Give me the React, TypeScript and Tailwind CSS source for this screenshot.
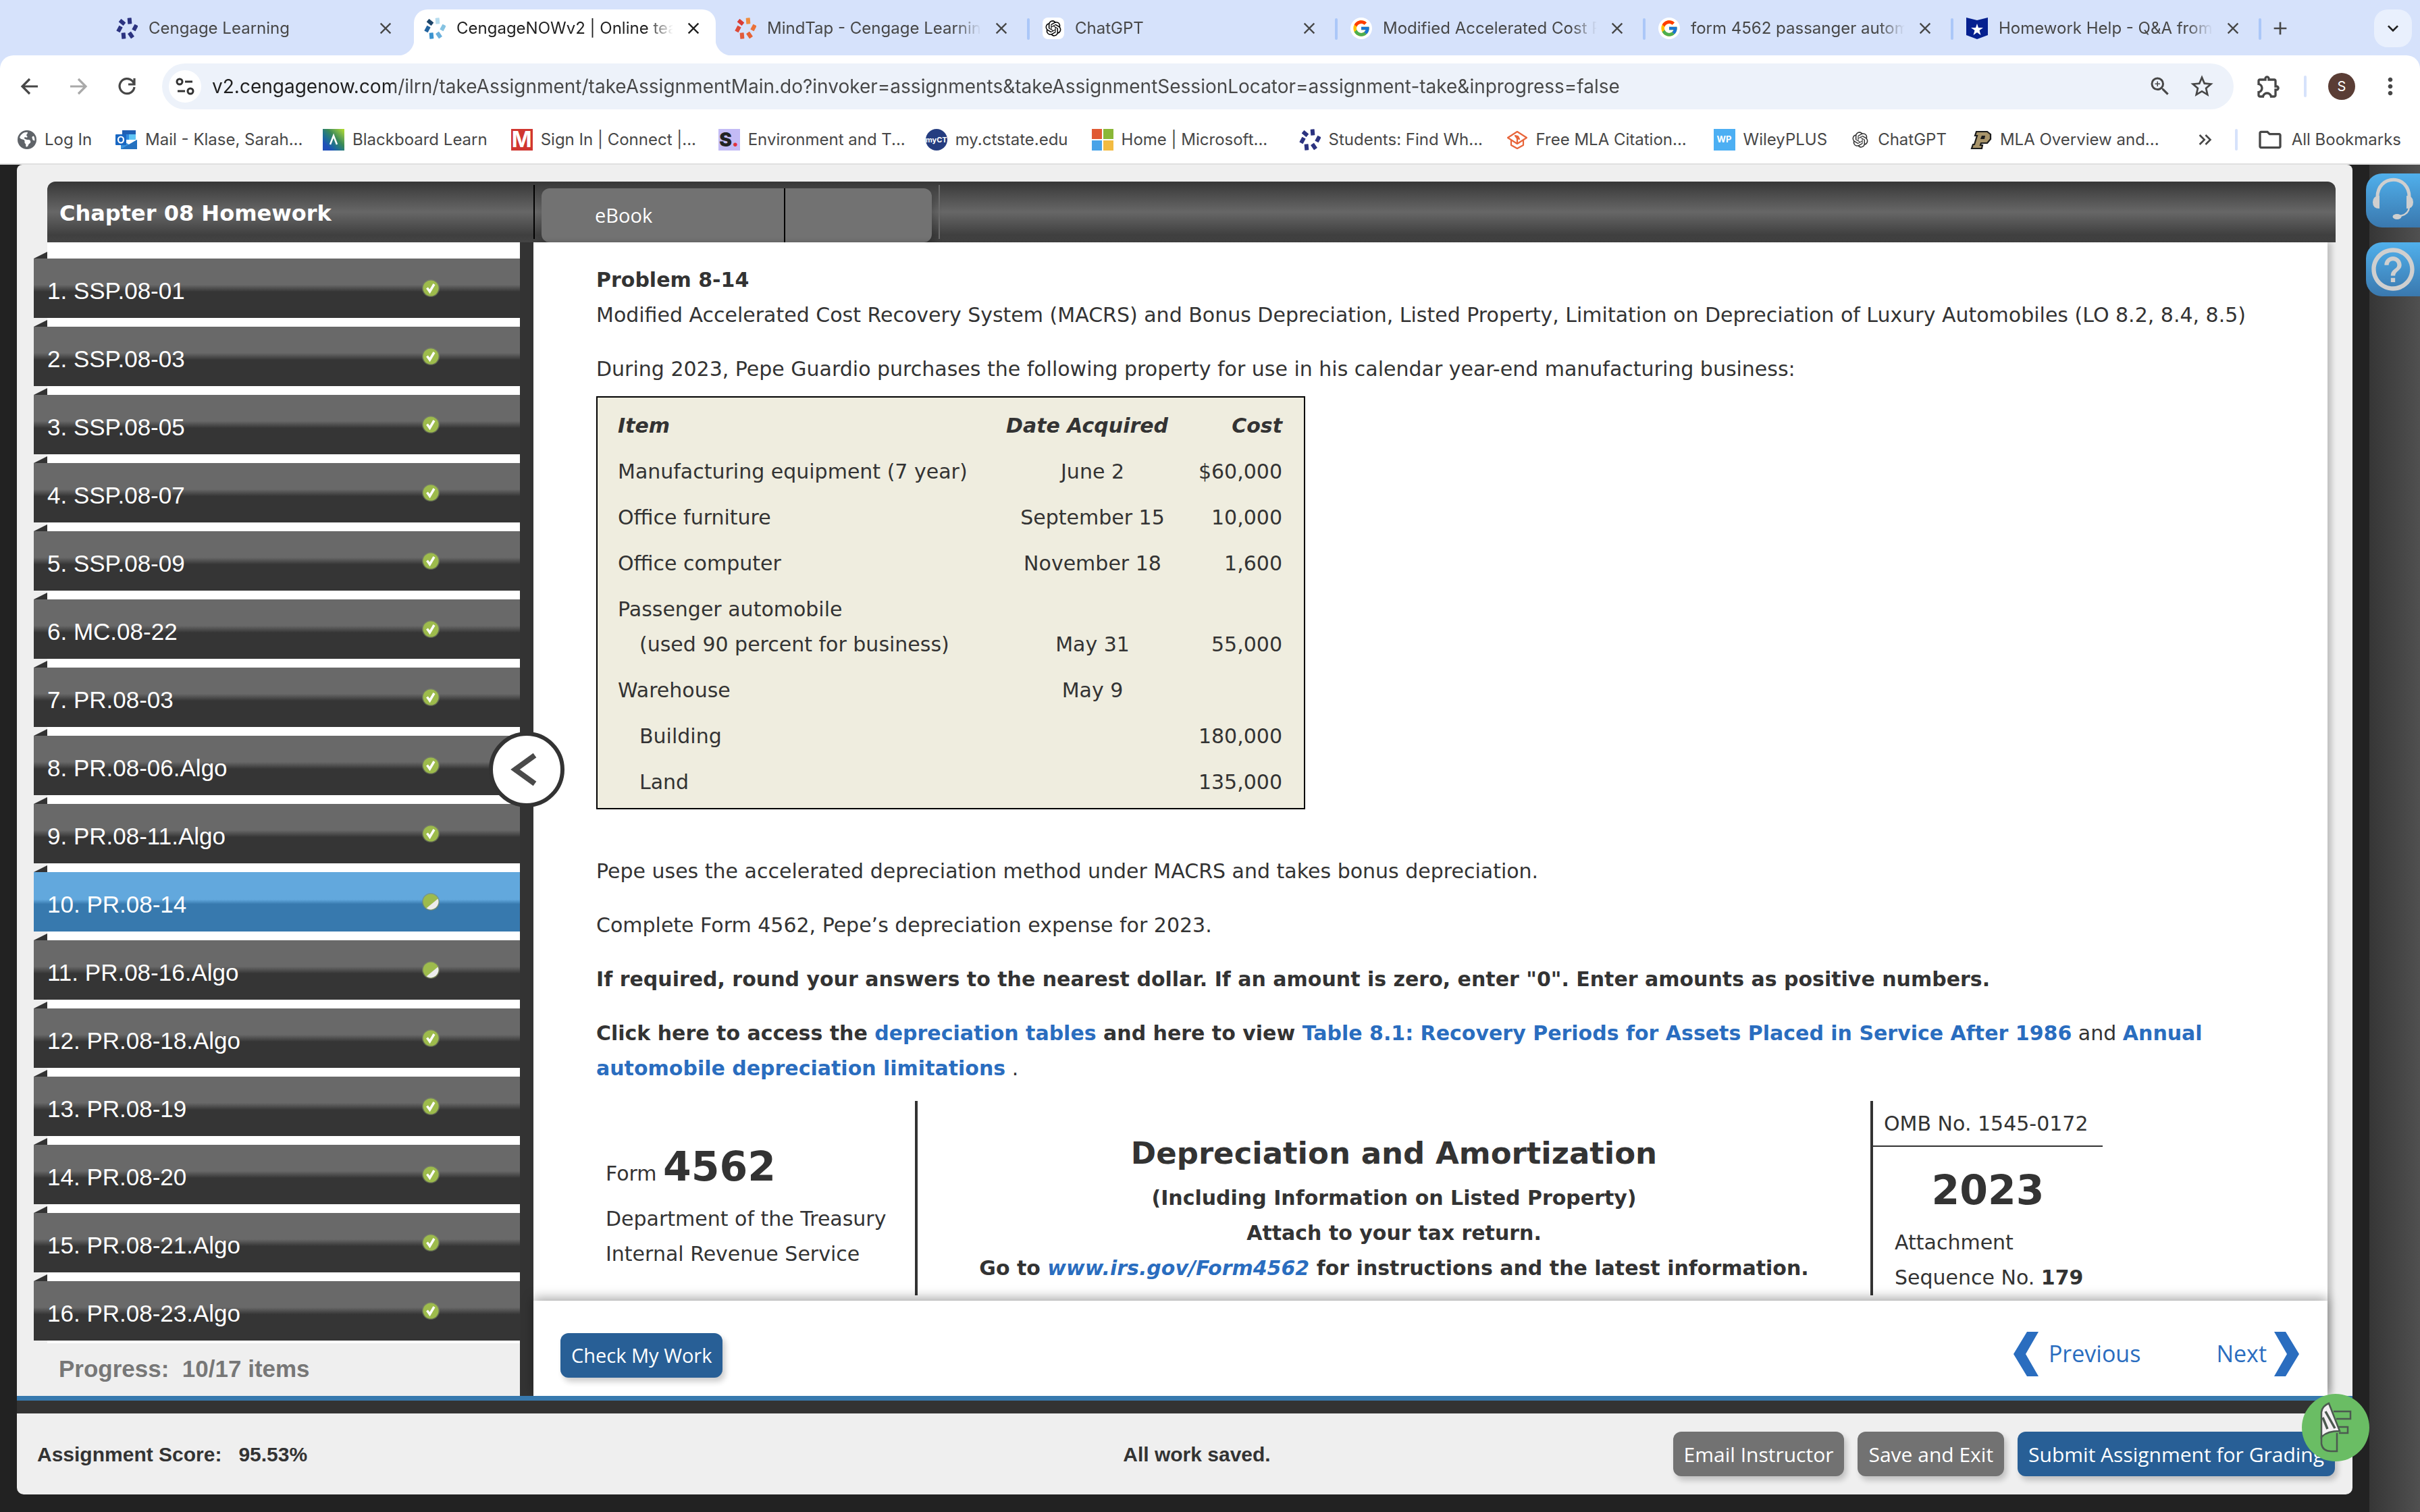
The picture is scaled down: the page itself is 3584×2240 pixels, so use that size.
import type { ReactNode } from 'react'
import {
  MdAdd,
  MdClose,
  MdHelpOutline,
  MdKeyboardArrowDown,
  MdKeyboardDoubleArrowRight,
  MdMoreVert,
  MdOutlineExtension,
  MdOutlineFolder,
  MdStarBorder,
  MdZoomIn,
} from 'react-icons/md'
import { FaEarthAmericas } from 'react-icons/fa6'
import { FcGoogle } from 'react-icons/fc'
import { RiOpenaiFill } from 'react-icons/ri'
import clsx from 'clsx'

const navy = ['#2c3380', '#2c3380', '#2c3380', '#2c3380', '#2c3380', '#2c3380']
const blues = ['#b5dcee', '#86c3e2', '#6bb0dc', '#3a93cf', '#23649f', '#1d4468']
const oranges = ['#ef8b3c', '#ea7238', '#e56236', '#e25a3a', '#dd4a38', '#d93b34']

/* Cengage pinwheel, petals run clockwise from the top */
function Pinwheel({ colors }: { colors: string[] }) {
  const petals = [
    [20, 5, -5],
    [28, 15, 28],
    [22, 26, -35],
    [11, 27, -5],
    [5, 17, 28],
    [9, 7, -50],
  ]
  return (
    <svg viewBox="0 0 32 32" className="size-8 shrink-0">
      {petals.map(([x, y, r], i) => (
        <rect
          key={i}
          x={x - 3}
          y={y - 4.5}
          width="6"
          height="9"
          rx="0.6"
          fill={colors[i]}
          transform={`rotate(${r} ${x} ${y})`}
        />
      ))}
    </svg>
  )
}

function ChatBadge() {
  return (
    <span className="flex size-8 shrink-0 items-center justify-center rounded-lg bg-white">
      <RiOpenaiFill className="size-7 text-black" />
    </span>
  )
}

function GoogleBadge() {
  return (
    <span className="flex size-8 shrink-0 items-center justify-center rounded-full bg-white">
      <FcGoogle className="size-7" />
    </span>
  )
}

function StarBanner() {
  return (
    <svg viewBox="0 0 32 32" className="size-8 shrink-0">
      <path d="M0 0l16 4L32 0v26l-16 6L0 26z" fill="#06208f" />
      <path d="M16 9l2 6h7l-5.500 4 2 7-5.500-4-5.500 4 2-7L7 15h7z" fill="#fff" />
    </svg>
  )
}

function Outlook() {
  return (
    <svg viewBox="0 0 32 32" className="size-8 shrink-0">
      <path d="M10 2h20v14H10z" fill="#1f5fb4" />
      <path d="M10 8h10v8H10z" fill="#2f8ade" />
      <path d="M20 8h10v8H20z" fill="#5fc5f5" />
      <path d="M8 16l12 7 12-7v14H8z" fill="#3b93dd" />
      <path d="M8 30l24-14v14z" fill="#2471c0" />
      <rect x="0" y="8" width="16" height="16" rx="1" fill="#1967c2" />
      <ellipse cx="8" cy="16" rx="4" ry="4.500" fill="none" stroke="#fff" strokeWidth="2.200" />
    </svg>
  )
}

function Blackboard() {
  return (
    <span className="flex size-8 shrink-0 items-center justify-center bg-linear-to-bl from-[#b6e020] via-[#3a8a56] via-40% to-[#1f4fb8] to-80%">
      <svg viewBox="0 0 32 32" className="size-8">
        <path d="M11 23l5-13 5 13" fill="none" stroke="#fff" strokeWidth="2.500" />
      </svg>
    </span>
  )
}

function PenDiamond() {
  return (
    <svg viewBox="0 0 32 32" className="size-8 shrink-0" fill="none" stroke="#e8653a" strokeWidth="2.200" strokeLinejoin="round">
      <path d="M16 4l14 9-14 9L2 13z" />
      <path d="M7 17v7l9 5 9-5v-7" />
      <path d="M13 10l4 1 2 4-3-1z" fill="#e8653a" />
      <path d="M16 14v8" />
    </svg>
  )
}

function MicrosoftLogo() {
  return (
    <span className="grid size-8 shrink-0 grid-cols-2 gap-[2px]">
      <span className="bg-[#e05a33]" />
      <span className="bg-[#8ab737]" />
      <span className="bg-[#49a3e8]" />
      <span className="bg-[#f3bb41]" />
    </span>
  )
}

const tabs: { title: string; icon: ReactNode }[] = [
  { title: 'Cengage Learning', icon: <Pinwheel colors={navy} /> },
  { title: 'CengageNOWv2 | Online teaching and learning', icon: <Pinwheel colors={blues} /> },
  { title: 'MindTap - Cengage Learning', icon: <Pinwheel colors={oranges} /> },
  { title: 'ChatGPT', icon: <ChatBadge /> },
  { title: 'Modified Accelerated Cost Recovery', icon: <GoogleBadge /> },
  { title: 'form 4562 passanger automobile', icon: <GoogleBadge /> },
  { title: 'Homework Help - Q&A from Online', icon: <StarBanner /> },
]

const bookmarks: { label: string; icon: ReactNode; wide?: boolean }[] = [
  { label: 'Log In', icon: <FaEarthAmericas className="size-7 shrink-0 text-[#5f6368]" /> },
  { label: 'Mail - Klase, Sarah...', icon: <Outlook />, wide: true },
  { label: 'Blackboard Learn', icon: <Blackboard /> },
  {
    label: 'Sign In | Connect |...',
    wide: true,
    icon: (
      <span className="flex size-8 shrink-0 items-center justify-center bg-[#d03630] text-[32px]/[32px] font-bold text-white">M</span>
    ),
  },
  {
    label: 'Environment and T...',
    wide: true,
    icon: (
      <span className="flex size-8 shrink-0 items-center justify-center bg-[#c3bbf5] text-[28px]/[32px] font-black text-[#222]">
        S<span className="text-[#e0323c]">.</span>
      </span>
    ),
  },
  {
    label: 'my.ctstate.edu',
    icon: (
      <span className="flex size-8 shrink-0 items-center justify-center rounded-full bg-[#253d80] text-[11px] font-bold text-white">myCT</span>
    ),
  },
  { label: 'Home | Microsoft...', icon: <MicrosoftLogo />, wide: true },
  { label: 'Students: Find Wh...', icon: <Pinwheel colors={navy} />, wide: true },
  { label: 'Free MLA Citation...', icon: <PenDiamond />, wide: true },
  {
    label: 'WileyPLUS',
    icon: (
      <span className="flex size-8 shrink-0 items-center justify-center bg-[#4caff3] text-[13px] font-bold text-white">WP</span>
    ),
  },
  { label: 'ChatGPT', icon: <RiOpenaiFill className="size-7 shrink-0 text-[#333]" /> },
  {
    label: 'MLA Overview and...',
    wide: true,
    icon: (
      <svg viewBox="0 0 32 32" className="size-8 shrink-0">
        <path
          d="M9 4h16l5 4v7l-5 6h-9l-1 3h3l-1 5H2l2-6h2l4-13H7z"
          fill="#a8946a"
          stroke="#1c1c1c"
          strokeWidth="2.200"
        />
        <path d="M17 10h5l-1 5h-6z" fill="#1c1c1c" />
      </svg>
    ),
  },
]

const items: { name: string; partial?: boolean; active?: boolean }[] = [
  { name: 'SSP.08-01' },
  { name: 'SSP.08-03' },
  { name: 'SSP.08-05' },
  { name: 'SSP.08-07' },
  { name: 'SSP.08-09' },
  { name: 'MC.08-22' },
  { name: 'PR.08-03' },
  { name: 'PR.08-06.Algo' },
  { name: 'PR.08-11.Algo' },
  { name: 'PR.08-14', partial: true, active: true },
  { name: 'PR.08-16.Algo', partial: true },
  { name: 'PR.08-18.Algo' },
  { name: 'PR.08-19' },
  { name: 'PR.08-20' },
  { name: 'PR.08-21.Algo' },
  { name: 'PR.08-23.Algo' },
]

const property = [
  { item: 'Manufacturing equipment (7 year)', date: 'June 2', cost: '$60,000' },
  { item: 'Office furniture', date: 'September 15', cost: '10,000' },
  { item: 'Office computer', date: 'November 18', cost: '1,600' },
  { item: 'Passenger automobile', sub: '(used 90 percent for business)', date: 'May 31', cost: '55,000' },
  { item: 'Warehouse', date: 'May 9', cost: '' },
  { sub: 'Building', date: '', cost: '180,000' },
  { sub: 'Land', date: '', cost: '135,000' },
]

function TabStrip() {
  return (
    <div className="flex h-[82px] items-end bg-[#d6e2fb] pr-3 pl-[157px]">
      <ul className="flex">
        {tabs.map((tab, i) => {
          const active = i === 1
          return (
            <li key={tab.title} className="flex w-[456px] items-start">
              <div
                className={clsx(
                  'relative flex h-[68px] min-w-0 flex-1 items-center pr-[19px] pb-[12px]',
                  i > 1 ? 'pl-[19px]' : 'pl-[15px]',
                  active ? 'rounded-t-[20px] bg-white text-[#1f1f1f]' : 'text-[#474747]'
                )}
              >
                {active && (
                  <>
                    <span className="absolute bottom-0 -left-6 size-6 bg-[radial-gradient(circle_at_0_0,transparent_24px,white_25px)]" />
                    <span className="absolute -right-6 bottom-0 size-6 bg-[radial-gradient(circle_at_100%_0,transparent_24px,white_25px)]" />
                  </>
                )}
                {tab.icon}
                <a
                  href="#"
                  className="ml-4 min-w-0 flex-1 overflow-hidden text-2xl whitespace-nowrap [mask-image:linear-gradient(to_right,#000_88%,transparent)]"
                >
                  {tab.title}
                </a>
                <button aria-label="Close tab" className="ml-4">
                  <MdClose className="size-7" />
                </button>
              </div>
              <span className={clsx('mt-[13px] ml-[5px] h-8 w-1 rounded-full', i > 1 && 'bg-[#abc7f8]')} />
            </li>
          )
        })}
      </ul>
      <button aria-label="New tab" className="mb-6 ml-3 text-[#474747]">
        <MdAdd className="size-8" />
      </button>
      <button
        aria-label="Search tabs"
        className="mb-3 ml-auto flex size-14 items-center justify-center rounded-[20px] bg-[#e9f0fd] text-[#1f1f1f]"
      >
        <MdKeyboardArrowDown className="size-8" />
      </button>
    </div>
  )
}

function AddressBar() {
  return (
    <div className="flex items-center gap-8 px-6 pt-3 text-[#474747]">
      <button aria-label="Back">
        <svg viewBox="0 0 40 40" className="size-10" fill="none" stroke="currentColor" strokeWidth="3.200">
          <path d="M32 20H10M20 9L9 20l11 11" />
        </svg>
      </button>
      <button aria-label="Forward" className="text-[#a9a9a9]">
        <svg viewBox="0 0 40 40" className="size-10" fill="none" stroke="currentColor" strokeWidth="3.200">
          <path d="M8 20h22M20 9l11 11-11 11" />
        </svg>
      </button>
      <button aria-label="Reload">
        <svg viewBox="0 0 40 40" className="size-10" fill="none" stroke="currentColor" strokeWidth="3.200">
          <path d="M31 21a11 11 0 1 1-3-9l3 4M31 8v9h-9" />
        </svg>
      </button>
      <div className="flex h-[68px] flex-1 items-center rounded-full bg-[#edf2fa] pr-[27px] pl-[10px]">
        <button aria-label="Site information" className="flex size-12 items-center justify-center rounded-full bg-white">
          <svg viewBox="0 0 32 32" className="size-8" fill="none" stroke="#333" strokeWidth="3">
            <circle cx="8" cy="9" r="4" />
            <path d="M16 9h11M5 23h11" />
            <circle cx="24" cy="23" r="4" />
          </svg>
        </button>
        <input
          aria-label="Address"
          defaultValue="v2.cengagenow.com/ilrn/takeAssignment/takeAssignmentMain.do?invoker=assignments&takeAssignmentSessionLocator=assignment-take&inprogress=false"
          className="ml-4 min-w-0 flex-1 bg-linear-[to_right,#1f1f1f_270px,#474747_270px] bg-clip-text text-[28px] text-transparent outline-none"
        />
        <button aria-label="Zoom">
          <MdZoomIn className="size-9" />
        </button>
        <button aria-label="Bookmark this page" className="ml-6">
          <MdStarBorder className="size-10" />
        </button>
      </div>
      <button aria-label="Extensions">
        <MdOutlineExtension className="size-10" />
      </button>
      <span className="h-8 w-1 rounded-full bg-[#d6e2fb]" />
      <button aria-label="Profile" className="size-10 rounded-full bg-[#5a3d35] text-xl text-white">
        S
      </button>
      <button aria-label="Menu">
        <MdMoreVert className="size-10" />
      </button>
    </div>
  )
}

function BookmarksBar() {
  return (
    <nav className="flex h-[80px] items-center gap-[35px] pt-[10px] pr-7 pl-[26px] text-2xl text-[#474747]">
      {bookmarks.map((b) => (
        <a key={b.label} href="#" className={clsx('flex items-center gap-3 whitespace-nowrap', b.wide && 'w-[272px]')}>
          {b.icon}
          {b.label}
        </a>
      ))}
      <span className="ml-auto flex items-center gap-7">
        <button aria-label="More bookmarks">
          <MdKeyboardDoubleArrowRight className="size-8" />
        </button>
        <span className="h-8 w-1 rounded-full bg-[#d6e2fb]" />
        <a href="#" className="flex items-center gap-3">
          <MdOutlineFolder className="size-10" />
          All Bookmarks
        </a>
      </span>
    </nav>
  )
}

function StatusDot({ partial }: { partial?: boolean }) {
  return (
    <svg viewBox="0 0 28 28" className="size-7">
      <circle cx="14" cy="14" r="13" fill="#7d8a66" opacity="0.6" />
      <circle cx="14" cy="14" r="11.500" fill="#9dbb4c" />
      {partial ? (
        <path d="M24.500 9.500A11.500 11.500 0 0 1 7.500 23.500z" fill="#ececec" />
      ) : (
        <path d="M8.500 13.500l4 5.500 6.500-11" fill="none" stroke="#fff" strokeWidth="3.500" />
      )}
    </svg>
  )
}

function Sidebar() {
  return (
    <aside className="relative flex w-[765px] shrink-0 flex-col border-r-[20px] border-[#333] font-['Liberation_Sans',Arial,sans-serif]">
      <ol className="ml-[45px] flex flex-col gap-[13px] bg-white pt-6 pb-1">
        {items.map((it, i) => (
          <li key={it.name} className="relative -ml-5">
            <span className="absolute -top-[10px] left-0 h-[10px] w-5 bg-[#333] [clip-path:polygon(0_100%,100%_0,100%_100%)]" />
            <a
              href="#"
              className={clsx(
                'flex h-[88px] items-center justify-between pr-[118px] pb-px pl-5 text-[35px]/[40px] text-white',
                it.active
                  ? 'bg-linear-[to_bottom,#62a8dd_46%,#3779ae_54%]'
                  : 'bg-linear-[to_bottom,#696969_44%,#353535_56%]'
              )}
            >
              <span className="pt-2">
                {i + 1}. {it.name}
              </span>
              <StatusDot partial={it.partial} />
            </a>
          </li>
        ))}
      </ol>
      <p className="pt-4 pl-[62px] text-[35px]/[44px] font-bold whitespace-pre text-[#777]">Progress:  10/17 items</p>
      {/* collapse handle sits on the divider */}
      <button
        aria-label="Collapse list"
        className="absolute top-[725px] -right-[66px] z-10 flex size-[112px] items-center justify-center rounded-full border-[6px] border-[#333] bg-white"
      >
        <svg viewBox="0 0 50 50" className="size-[50px]" fill="none" stroke="#4a4a4a" strokeWidth="8">
          <path d="M37 4L8 25l29 21" />
        </svg>
      </button>
    </aside>
  )
}

function PropertyTable() {
  return (
    <table className="mt-[14px] w-[1050px] border-2 border-black bg-[#efeddf]">
      <thead>
        <tr className="font-bold italic">
          <th className="w-[592px] pt-4 pb-2 pl-[30px] text-left">Item</th>
          <th className="w-[284px] pt-4 pb-2 pl-[14px] text-left">Date Acquired</th>
          <th className="pt-4 pr-[32px] pb-2 text-right">Cost</th>
        </tr>
      </thead>
      <tbody className="[&>tr:last-child>td]:pb-3">
        {property.map((row) => (
          <tr key={row.cost + row.date} className="align-bottom">
            <td className="py-2 pl-[30px]">
              {row.item}
              {row.sub && <div className="pl-8">{row.sub}</div>}
            </td>
            <td className="py-2 text-center">{row.date}</td>
            <td className="py-2 pr-[32px] text-right">{row.cost}</td>
          </tr>
        ))}
      </tbody>
    </table>
  )
}

function FormHeader() {
  return (
    <div className="mt-[22px] mb-2 flex">
      <div className="w-[472px] pt-[71px] pl-[14px]">
        <p className="mb-[15px]">
          Form <b className="text-[60px]/[52px]">4562</b>
        </p>
        <p>Department of the Treasury</p>
        <p>Internal Revenue Service</p>
      </div>
      <div className="flex-1 border-x-4 border-[#333] pt-[52px] text-center font-bold">
        <h2 className="mb-[14px] text-[45px]/[52px]">Depreciation and Amortization</h2>
        <p>(Including Information on Listed Property)</p>
        <p>Attach to your tax return.</p>
        <p>
          Go to{' '}
          <a href="#" className="text-[#2a6dbf] italic">
            www.irs.gov/Form4562
          </a>{' '}
          for instructions and the latest information.
        </p>
      </div>
      <div className="w-[613px]">
        <p className="w-[340px] border-b-2 border-[#333] pt-2 pb-[6px] pl-4">OMB No. 1545-0172</p>
        <p className="w-[340px] pt-[38px] pb-[26px] text-center text-[60px]/[52px] font-bold">2023</p>
        <p className="pl-8">Attachment</p>
        <p className="pl-8">
          Sequence No. <b>179</b>
        </p>
      </div>
    </div>
  )
}

function Problem() {
  return (
    <article className="pt-[30px] pr-[60px] pl-[93px] font-['DejaVu_Sans',Verdana,sans-serif] text-[30px]/[52px] text-[#333]">
      <h1 className="font-bold">Problem 8-14</h1>
      <p className="mb-7">
        Modified Accelerated Cost Recovery System (MACRS) and Bonus Depreciation, Listed Property, Limitation on
        Depreciation of Luxury Automobiles (LO 8.2, 8.4, 8.5)
      </p>
      <p>During 2023, Pepe Guardio purchases the following property for use in his calendar year-end manufacturing business:</p>
      <PropertyTable />
      <div className="mt-[66px] flex flex-col gap-7">
        <p>Pepe uses the accelerated depreciation method under MACRS and takes bonus depreciation.</p>
        <p>Complete Form 4562, Pepe’s depreciation expense for 2023.</p>
        <p className="font-bold">
          If required, round your answers to the nearest dollar. If an amount is zero, enter "0". Enter amounts as
          positive numbers.
        </p>
        <p>
          <b>
            Click here to access the{' '}
            <a href="#" className="text-[#2a6dbf]">
              depreciation tables
            </a>{' '}
            and here to view{' '}
            <a href="#" className="text-[#2a6dbf]">
              Table 8.1: Recovery Periods for Assets Placed in Service After 1986
            </a>
          </b>{' '}
          and{' '}
          <a href="#" className="font-bold text-[#2a6dbf]">
            Annual automobile depreciation limitations
          </a>{' '}
          .
        </p>
      </div>
      <FormHeader />
    </article>
  )
}

const button = 'h-[66px] rounded-[12px] px-4 text-white shadow-[4px_6px_8px_rgba(0,0,0,0.2)]'

function ProblemNav() {
  return (
    <div className="relative flex h-[141px] items-center justify-between bg-white pr-[42px] pl-10 font-['Open_Sans',sans-serif] shadow-[0_-4px_16px_rgba(0,0,0,0.35)]">
      <button className={clsx(button, 'mt-5 bg-[#285f96] text-[29px]')}>Check My Work</button>
      <div className="mt-4 flex gap-[112px] text-[34px] text-[#2a6dbf]">
        <a href="#" className="flex items-center gap-[14px]">
          <svg viewBox="0 0 38 66" className="h-[66px] w-[38px]">
            <path d="M20 0h17L18 33l19 33H20L0 33z" fill="currentColor" />
          </svg>
          Previous
        </a>
        <a href="#" className="flex items-center gap-[10px]">
          Next
          <svg viewBox="0 0 38 66" className="h-[66px] w-[38px]">
            <path d="M18 0H1l19 33L1 66h17l20-33z" fill="currentColor" />
          </svg>
        </a>
      </div>
    </div>
  )
}

function Footer() {
  return (
    <footer className="grid h-[120px] grid-cols-3 items-center rounded-b-[10px] bg-[#efefef] pr-[26px] pl-[30px] font-['Liberation_Sans',Arial,sans-serif] text-[30px] font-bold text-[#333]">
      <p className="whitespace-pre">Assignment Score:   95.53%</p>
      <p className="pl-8 text-center">All work saved.</p>
      <div className="flex justify-end gap-5 font-['Open_Sans',sans-serif] font-normal">
        <button className={clsx(button, 'bg-[#727272]')}>Email Instructor</button>
        <button className={clsx(button, 'bg-[#727272]')}>Save and Exit</button>
        <button className={clsx(button, 'bg-[#285f96] whitespace-nowrap')}>Submit Assignment for Grading</button>
      </div>
    </footer>
  )
}

function ToolBadge() {
  return (
    <button aria-label="Writing tool" className="absolute -right-[25px] bottom-[49px] z-20 size-[100px] rounded-full bg-[#6abd64]">
      <svg viewBox="0 0 100 100" className="size-[100px]" fill="none" stroke="#4c5a50" strokeWidth="2.500">
        <path d="M47 26h25v11H51M54 49h14v9H55" />
        <path d="M29 62v12q2 11 14 11h9V58" />
        <path d="M29 64V27q1-9 11-13l16 41q-18 0-26 8z" fill="#f4f0f4" />
        <path d="M35 26l14 25M31 35l7 17" strokeWidth="3.500" />
      </svg>
    </button>
  )
}

function HelpRail() {
  const help =
    '-ml-[5px] flex h-20 w-20 items-center justify-center rounded-l-[24px] bg-linear-to-b from-[#50b0ec] to-[#3a78ae] text-[#cfcfcf]'
  return (
    <aside className="flex w-[75px] shrink-0 flex-col gap-[22px] bg-linear-to-r from-[#363636] to-[#505050] pt-[13px]">
      <button aria-label="Support" className={help}>
        <svg viewBox="0 0 80 80" className="size-20" fill="none" stroke="currentColor">
          <path d="M17 37C15 0 66 0 64 37" strokeWidth="5" />
          <path d="M64 50q-1 11-14 13" strokeWidth="2.500" />
          <path d="M20 33v19q-10 0-10-9.500T20 33zM60 33v19q10 0 10-9.500T60 33z" fill="currentColor" stroke="none" />
          <ellipse cx="46" cy="64" rx="6.500" ry="4" fill="currentColor" stroke="none" />
        </svg>
      </button>
      <button aria-label="Help" className={help}>
        <MdHelpOutline className="size-[76px]" />
      </button>
    </aside>
  )
}

export default function App() {
  return (
    <div className="flex min-h-screen flex-col bg-[#222] font-[Inter,Roboto,sans-serif]">
      <TabStrip />
      <div className="bg-[#d6e2fb]">
        <div className="rounded-t-[20px] border-b-2 border-[#e0e0e0] bg-white">
          <AddressBar />
          <BookmarksBar />
        </div>
      </div>

      <div className="flex flex-1">
        <div className="relative min-w-0 flex-1 px-[25px]">
          <div className="relative">
            <div className="rounded-t-[8px] bg-[#efefef] pt-[25px]">
              <header className="mr-[25px] ml-[45px] flex h-[90px] items-center rounded-t-[12px] bg-linear-[to_bottom,#373737,#676767_50%,#3f3f3f_88%,#444] font-['Open_Sans',sans-serif] text-white">
                <h1 className="w-[720px] pt-1 pl-[18px] font-['DejaVu_Sans',Verdana,sans-serif] text-[32px] font-bold">
                  Chapter 08 Homework
                </h1>
                <span className="h-20 w-[2px] bg-black" />
                <div className="mt-[10px] ml-[10px] flex h-20 w-[578px] rounded-[12px] bg-[#727272] shadow-[4px_8px_12px_rgba(0,0,0,0.2)]">
                  <a href="#" className="flex w-[361px] items-center border-r-2 border-black pl-[79px] text-[29px]">
                    eBook
                  </a>
                </div>
                <span className="ml-[10px] h-20 w-[2px] bg-[#6a6a6a]" />
              </header>
              <div className="flex">
                <Sidebar />
                <main className="mr-[37px] min-w-0 flex-1 bg-white shadow-[6px_0_8px_rgba(0,0,0,0.2)]">
                  <Problem />
                  <ProblemNav />
                </main>
              </div>
            </div>
            <div className="relative h-[26px] border-t-[7px] border-[#3779ae] bg-[#333]" />
            <Footer />
            <ToolBadge />
          </div>
        </div>
        <HelpRail />
      </div>
    </div>
  )
}
